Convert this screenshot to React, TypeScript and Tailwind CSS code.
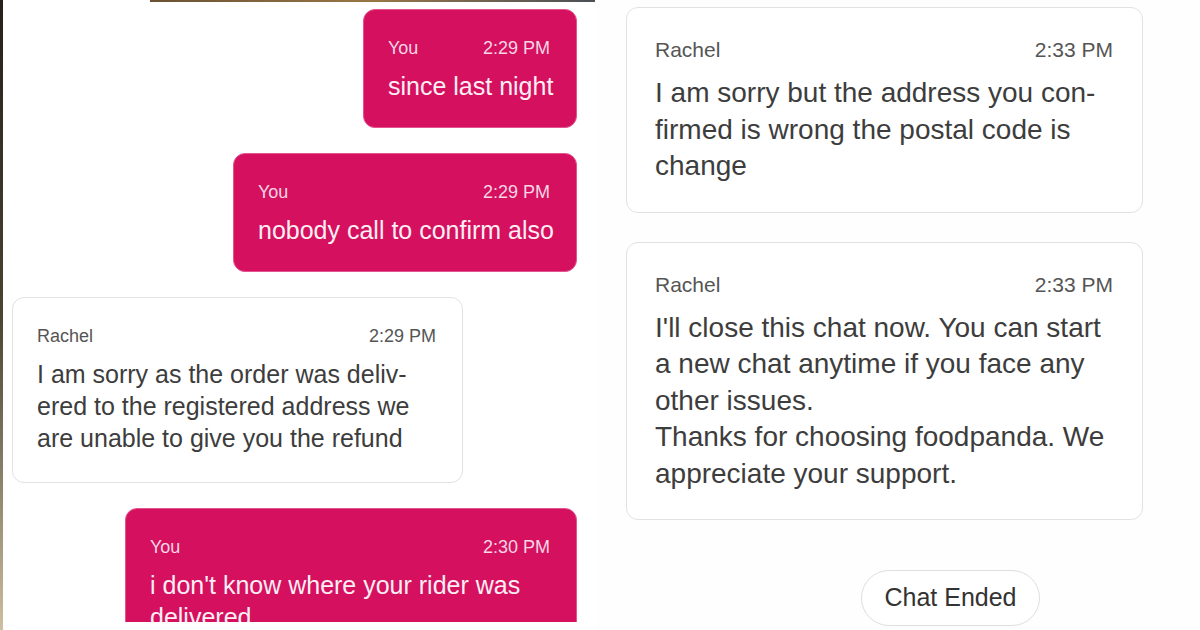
import React from 'react';

type Msg = {
  who: string;
  time: string;
  lines: string[];
  mine?: boolean;
  width: string;
};

const LEFT: Msg[] = [
  { who: 'You', time: '2:29 PM', lines: ['since last night'], mine: true, width: 'w-[214px]' },
  { who: 'You', time: '2:29 PM', lines: ['nobody call to confirm also'], mine: true, width: 'w-[344px]' },
  {
    who: 'Rachel',
    time: '2:29 PM',
    lines: ['I am sorry as the order was deliv-', 'ered to the registered address we', 'are unable to give you the refund'],
    width: 'w-[451px]',
  },
  { who: 'You', time: '2:30 PM', lines: ["i don't know where your rider was", 'delivered'], mine: true, width: 'w-[452px]' },
];

const RIGHT: Msg[] = [
  {
    who: 'Rachel',
    time: '2:33 PM',
    lines: ['I am sorry but the address you con-', 'firmed is wrong the postal code is', 'change'],
    width: 'w-[517px]',
  },
  {
    who: 'Rachel',
    time: '2:33 PM',
    lines: [
      "I'll close this chat now. You can start",
      'a new chat anytime if you face any',
      'other issues.',
      'Thanks for choosing foodpanda. We',
      'appreciate your support.',
    ],
    width: 'w-[517px]',
  },
];

// left screenshot: slightly smaller type
const SmallBubble: React.FC<{ msg: Msg }> = ({ msg }) => (
  <div
    className={`${msg.width} shrink-0 rounded-[12px] pl-6 pr-[26px] pt-[26px] ${
      msg.mine
        ? 'self-end bg-[#d4105f] border border-[#e4558f] pb-[25px]'
        : 'self-start ml-[9px] bg-white border border-[#e2e2e2] rounded-[10px] pb-[28px]'
    }`}
  >
    <div className={`flex justify-between text-[18px] leading-[24px] ${msg.mine ? 'text-[#f8d5e4]' : 'text-[#555555]'}`}>
      <span>{msg.who}</span>
      <span>{msg.time}</span>
    </div>
    <div className={`mt-[10px] text-[25px] leading-[32px] whitespace-nowrap ${msg.mine ? 'text-[#fdeef4]' : 'text-[#3d3d3d]'}`}>
      {msg.lines.map((l, i) => (
        <div key={i}>{l}</div>
      ))}
    </div>
  </div>
);

const LargeBubble: React.FC<{ msg: Msg }> = ({ msg }) => (
  <div className={`${msg.width} shrink-0 rounded-[12px] bg-white border border-[#e2e2e2] pl-[28px] pr-[29px] pt-[28px] pb-[27px]`}>
    <div className="flex justify-between text-[21px] leading-[27px] text-[#555555]">
      <span>{msg.who}</span>
      <span>{msg.time}</span>
    </div>
    <div className="mt-[12px] text-[28px] leading-[36.5px] text-[#3d3d3d] whitespace-nowrap">
      {msg.lines.map((l, i) => (
        <div key={i}>{l}</div>
      ))}
    </div>
  </div>
);

export default function App() {
  return (
    <div
      className="flex w-[1200px] h-[630px] overflow-hidden bg-white"
      style={{ fontFamily: '"Liberation Sans", Arial, sans-serif' }}
    >
      {/* left screenshot */}
      <div className="flex w-[595px] h-[630px] shrink-0">
        <div className="w-[3px] h-full bg-gradient-to-b from-[#25211a] via-[#4b4333] to-[#cdbf9f]" />
        <div className="flex-1 flex flex-col">
          <div className="h-[2px] ml-[147px] bg-gradient-to-r from-[#6b5234] via-[#9a7644] to-[#4a4f55]" />
          <div className="h-[620px] overflow-hidden flex flex-col items-end gap-[25px] pt-[7px] pr-[18px]">
            {LEFT.map((m, i) => (
              <SmallBubble key={i} msg={m} />
            ))}
          </div>
        </div>
      </div>

      {/* right screenshot */}
      <div className="flex-1 flex flex-col pl-[31px] pt-[7px] bg-[#fefefe]">
        <div className="flex flex-col gap-[29px]">
          {RIGHT.map((m, i) => (
            <LargeBubble key={i} msg={m} />
          ))}
        </div>
        <div className="mt-[50px] ml-[235px] w-[179px] h-[56px] shrink-0 rounded-full border border-[#dedede] bg-white flex items-center justify-center text-[25px] text-[#333333]">
          Chat Ended
        </div>
      </div>
    </div>
  );
}
